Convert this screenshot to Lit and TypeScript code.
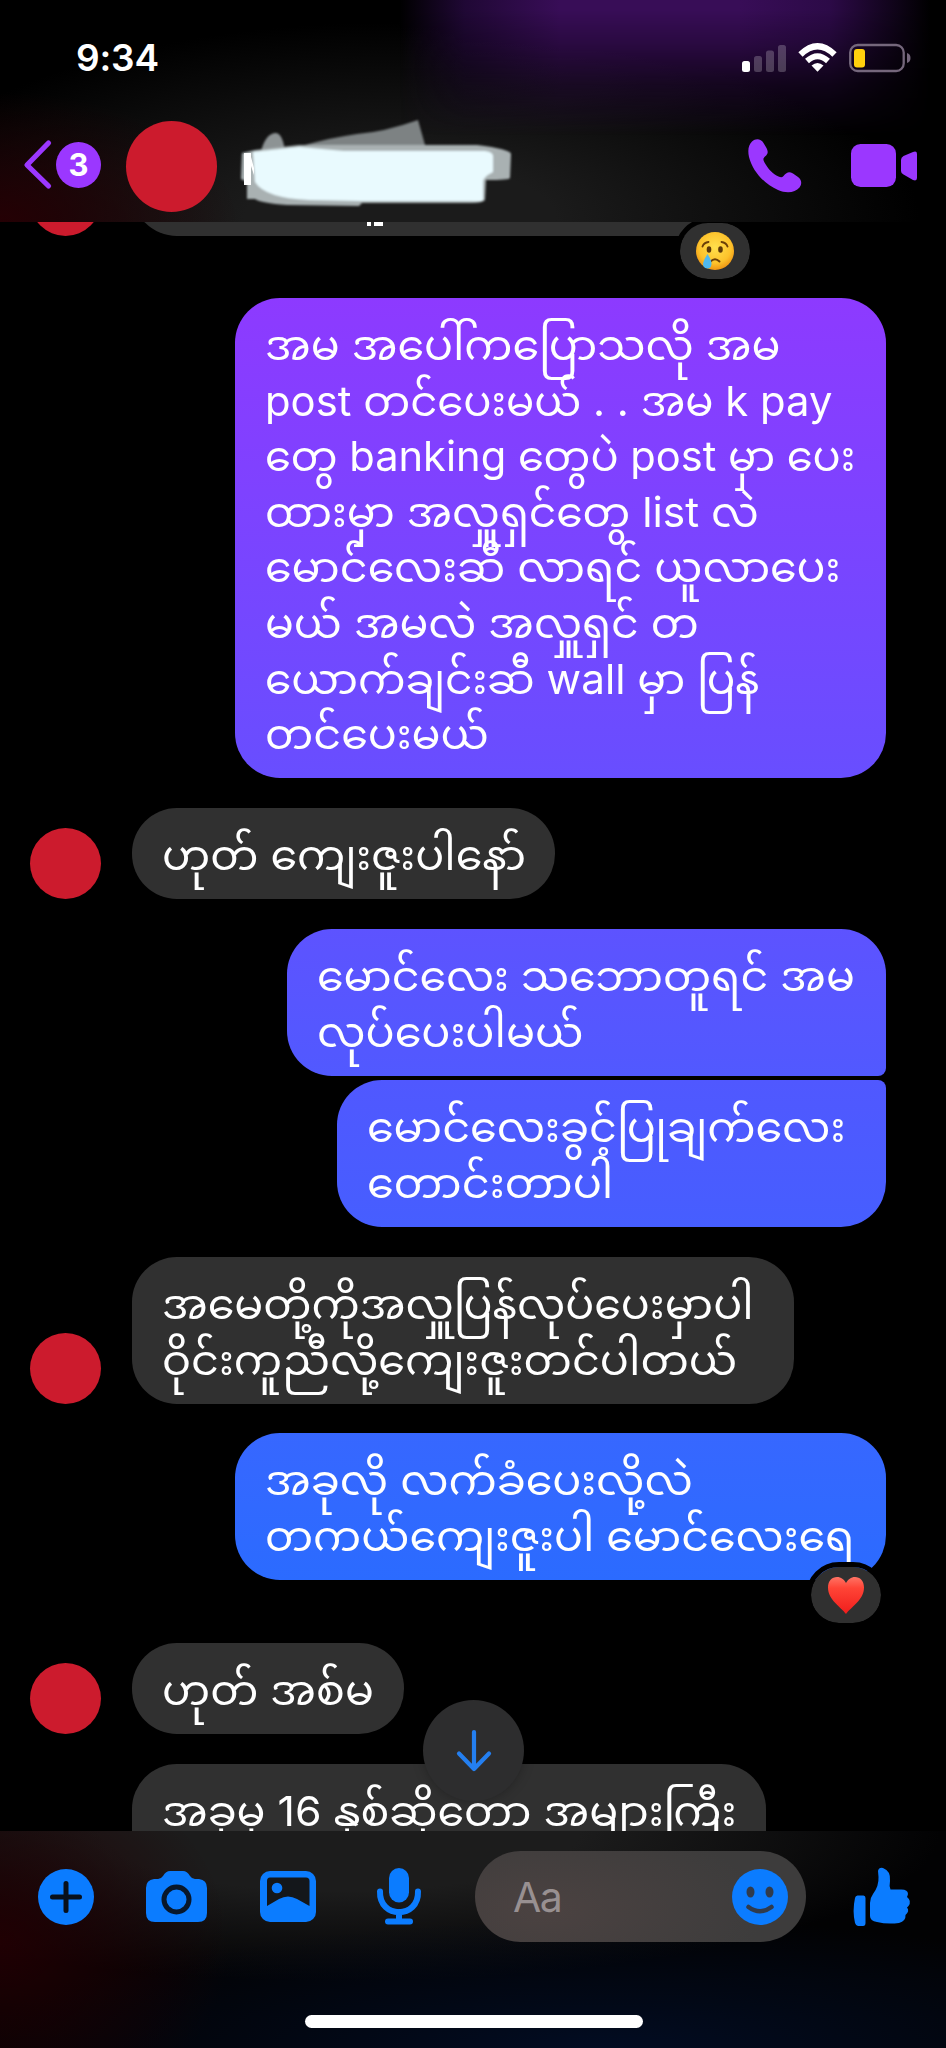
import { LitElement, html, css, svg } from "lit";
import { customElement, property } from "lit/decorators.js";

type Line = [string, number];

/** Message bubble; each line is set to its own measure. */
@customElement("chat-bubble")
class ChatBubble extends LitElement {
  @property({ attribute: false }) lines: Line[] = [];
  @property({ attribute: false }) tone = "grey";

  static styles = css`
    :host { display: block; }
    .bubble {
      box-sizing: border-box;
      width: 100%;
      height: 100%;
      padding: 20px 30px 0;
      border-radius: 45px;
      background: #303030;
      color: #fff;
      font: 400 41px/55.6px Inter, "Noto Sans Myanmar", "Noto Sans", "Liberation Sans", sans-serif;
    }
    .line { height: 55.6px; white-space: nowrap; }
    .line span { display: inline-block; transform-origin: 0 50%; white-space: nowrap; }
    .t1 { background: linear-gradient(#8d3aff, #684eff); }
    .t2 { background: linear-gradient(#5d53ff, #5159ff); border-bottom-right-radius: 8px; }
    .t3 { background: linear-gradient(#5058ff, #465eff); border-top-right-radius: 8px; }
    .t4 { background: linear-gradient(#3767ff, #2b6bff); }
  `;

  async firstUpdated() {
    await document.fonts.ready;
    this.renderRoot.querySelectorAll<HTMLElement>(".line span").forEach((el, i) => {
      el.style.transform = `scaleX(${(this.lines[i][1] + 4) / el.offsetWidth})`;
    });
  }

  render() {
    return html`<div class="bubble ${this.tone}">
      ${this.lines.map(([t]) => html`<div class="line"><span>${t}</span></div>`)}
    </div>`;
  }
}

const cry = svg`
  <defs><radialGradient id="f" cx=".5" cy=".4" r=".6"><stop offset="0" stop-color="#ffe04d"/><stop offset=".7" stop-color="#fdc22b"/><stop offset="1" stop-color="#ef9413"/></radialGradient></defs>
  <circle cx="19" cy="19" r="19" fill="url(#f)"/>
  <ellipse cx="13" cy="17.5" rx="2.3" ry="3.3" fill="#5b3708"/><ellipse cx="24.5" cy="17.5" rx="2.3" ry="3.3" fill="#5b3708"/>
  <path d="M6.500 14.500Q8 10.500 12.500 10M25.500 10Q30 10.500 31.500 14.500M14.500 29.500Q19 25 23.500 29.500" fill="none" stroke="#6b3f08" stroke-width="1.900" stroke-linecap="round"/>
  <path d="M11.500 22Q15.500 28 15.500 32Q15 37 11 36.500Q7 36 7 31.500Q8 27 11.500 22Z" fill="#4fb9ef"/>`;
const heart = svg`
  <defs><linearGradient id="h" x1="0" y1="0" x2="0" y2="1"><stop offset="0" stop-color="#ff7364"/><stop offset=".3" stop-color="#ff4436"/><stop offset="1" stop-color="#f01d1c"/></linearGradient></defs>
  <path d="M19 38C14 31 1 24 1 11.500C1 5 5 1 10 1C14 1 17 3.500 19 7C21 3.500 24 1 28 1C33 1 37 5 37 11.500C37 24 24 31 19 38Z" fill="url(#h)"/>`;

@customElement("app-root")
class AppRoot extends LitElement {
  static styles = css`
    :host { display: block; width: 946px; height: 2048px; overflow: hidden; background: #000; color: #fff;
      font-family: Inter, "Liberation Sans", sans-serif; }
    .phone { height: 2048px; display: flex; flex-direction: column; background: #000; }
    svg { display: block; overflow: visible; }
    .top { height: 222px; flex: none; display: flex; flex-direction: column; position: relative; isolation: isolate;
      background:
        radial-gradient(ellipse 240px 130px at 0 222px, #250004, transparent),
        radial-gradient(ellipse 520px 200px at 400px 222px, #1b1b1b 30%, transparent),
        #000; }
    .top::before { content: ""; position: absolute; inset: 0; z-index: -1;
      background: linear-gradient(90deg, transparent 400px, #200835 465px, #380d57 560px, #380d57 740px, #2c0a47 830px, transparent 930px);
      -webkit-mask-image: linear-gradient(#000 10px, #000b 45px, #0005 85px, transparent 135px); }
    .status { height: 88px; flex: none; box-sizing: border-box; padding: 32px 35px 0 76px; display: flex; justify-content: space-between; }
    .time { font-weight: 600; font-size: 37px; line-height: 52px; letter-spacing: -.2px; }
    .sys { display: flex; gap: 12px; padding-top: 11px; }
    .nav { height: 134px; flex: none; display: flex; align-items: center; padding-left: 24px; box-sizing: border-box; padding-top: 20px; }
    .chev { margin-right: 4px; }
    .count { width: 45px; height: 46px; border-radius: 50%; background: #9b37ff; font: 700 31px/46px Inter, sans-serif; text-align: center; }
    .face { width: 91px; height: 91px; border-radius: 50%; background: #cc1b2d; flex: none; }
    .nav .face { margin-left: 25px; margin-top: 3px; }
    .name { margin: -7px 0 0 23px; }
    .calls { flex: 1; display: flex; justify-content: space-between; padding: 2px 29px 0 236px; align-items: center; }
    .feed { height: 1609px; flex: none; overflow: hidden; position: relative; }
    .row { display: flex; align-items: flex-end; position: relative; }
    .in { padding-left: 30px; gap: 31px; }
    .in .face { width: 71px; height: 71px; }
    .out { justify-content: flex-end; padding-right: 60px; }
    .spacer { width: 71px; flex: none; }
    .r0 { height: 14px; } .r1 { height: 480px; margin-top: 62px; } .r2 { height: 91px; margin-top: 30px; }
    .r3 { height: 147px; margin-top: 30px; } .r4 { height: 147px; margin-top: 4px; }
    .r5 { height: 147px; margin-top: 30px; } .r6 { height: 147px; margin-top: 29px; }
    .r7 { height: 91px; margin-top: 63px; } .r8 { height: 147px; margin-top: 30px; }
    .row chat-bubble { height: 100%; }
    .b0 { width: 610px; height: 90px; border-radius: 45px; background: #303030; }
    .w1 { width: 651px; } .w2 { width: 423px; } .w3 { width: 599px; } .w4 { width: 549px; }
    .w5 { width: 662px; } .w6 { width: 651px; } .w7 { width: 272px; } .w8 { width: 634px; }
    .react { position: absolute; width: 70px; height: 56px; border-radius: 33px; background: #303030; border: 5px solid #000;
      background-clip: padding-box; display: grid; place-items: center; }
    .ra { left: 675px; top: -4px; } .rb { left: 806px; top: 129px; }
    .crumbs { position: absolute; left: 367px; top: 0; }
    .down { position: absolute; left: 423px; top: 1478px; width: 101px; height: 101px; border-radius: 50%; background: #2d2d2e;
      display: grid; place-items: center; box-shadow: 0 0 12px #0004; }
    .bottom { flex: 1; display: flex; flex-direction: column; align-items: center;
      background:
        radial-gradient(ellipse 230px 190px at 0 110px, #200003, transparent),
        radial-gradient(ellipse 620px 130px at 600px 217px, #020c22, transparent),
        radial-gradient(ellipse 600px 150px at 340px 0, #1c1c1c 40%, transparent),
        #020203; }
    .tools { height: 131px; width: 100%; box-sizing: border-box; padding: 0 36px 0 38px; display: flex; align-items: center; }
    .tools .cam { margin-left: 52px; } .tools .pic { margin-left: 53px; } .tools .mic { margin-left: 61px; }
    .tools .like { margin-left: 47px; }
    .input { width: 331px; height: 91px; margin-left: 54px; box-sizing: border-box; padding: 0 18px 0 38px; border-radius: 46px; display: flex; align-items: center;
      justify-content: space-between; color: #989091; font-size: 41px; letter-spacing: -1.5px;
      background: radial-gradient(ellipse 220px 90px at 70px 60px, #4b4241, transparent), #3d3c3c; }
    .home { width: 338px; height: 13px; border-radius: 7px; background: #fff; margin: 53px 0 0 2px; }
  `;

  render() {
    const blue = "#0b7cff";
    return html`<div class="phone">
      <header class="top">
        <div class="status">
          <div class="time">9:34</div>
          <div class="sys">
            <svg width="44" height="29"><rect y="18" width="8" height="11" rx="2.500" fill="#fff"/><g fill="#fff" opacity=".22"><rect x="12" y="13" width="8" height="16" rx="2.500"/><rect x="24" y="7.500" width="8" height="21.500" rx="2.500"/><rect x="36" y="2" width="8" height="27" rx="2.500"/></g></svg>
            <svg width="39" height="29" fill="none" stroke="#fff"><path d="M2.500 11.500Q19.500 -5 36.500 11.500" stroke-width="6.200"/><path d="M9 18Q19.500 8.500 30 18" stroke-width="5.800"/><path d="M13.500 22.500Q19.500 17.500 25.500 22.500L19.500 28.800Z" fill="#fff" stroke="none"/></svg>
            <svg width="62" height="29"><rect x="1.200" y="2" width="53.500" height="26" rx="7.500" fill="none" stroke="#75677c" stroke-width="2.300"/><rect x="5" y="6" width="11" height="18.500" rx="3" fill="#ffd00d"/><path d="M58 10Q61.500 11 61.500 15Q61.500 19 58 20Z" fill="#75677c"/></svg>
          </div>
        </div>
        <div class="nav">
          <svg class="chev" width="28" height="50"><path d="M24.500 3L3 25L24.500 46" fill="none" stroke="#9b37ff" stroke-width="5.200" stroke-linecap="round" stroke-linejoin="round"/></svg>
          <div class="count">3</div>
          <div class="face"></div>
          <svg class="name" width="272" height="86" viewBox="241 119 272 86">
            <defs><filter id="s"><feGaussianBlur stdDeviation="1.300"/></filter></defs>
            <g filter="url(#s)">
              <path d="M262 151Q267 133 277 133Q284 134 286 152Z" fill="#8d9394"/>
              <path d="M302 146Q335 137 358 134Q385 132 419 120L426 145L410 151L300 149Z" fill="#7d8283"/>
              <path d="M300 145L478 145Q511 149 512 154L511 178Q510 180 487 180L486 200Q484 203 472 203L363 203L360 206L288 205Q262 203 256 199L248 199L248 182L242 179L243 153L256 150Z" fill="#a9b1b2"/>
              <path d="M254 152L300 147L345 151L410 151L486 151Q494 152 494 156L494 172Q484 177 484 182L484 200Q482 202 472 201L362 201L310 200Q266 198 256 182Z" fill="#e9fafe"/>
            </g>
            <path d="M245 153H252V157L255 168V175L252 166V185H245Z" fill="#fff"/>
          </svg>
          <div class="calls">
            <svg width="54" height="54" viewBox="0 0 54 54"><path d="M4 2.500C8-1 13 0 15.500 4L18.500 9C20.500 13 20 15 17 17.500C15 19.500 15 20.500 16.500 23.500C20 30 25 35 30.500 37.500C33 38.500 34 38.500 35.500 37C39 33 41 32.500 45 34.500L50 38C54 41 54 45 51.500 48.500C47 54 38 54.500 30 51C16 45 4.500 32 1 18C-.500 11 .500 6 4 2.500Z" fill="#9b37ff"/></svg>
            <svg width="66" height="44" viewBox="0 0 66 44"><rect width="45" height="43" rx="9.500" fill="#9b37ff"/><path d="M50 16Q50 13.500 52.500 12L62 8Q66 6.500 66 10V34Q66 37.500 62 36L52.500 30.500Q50 29.500 50 27Z" fill="#9b37ff"/></svg>
          </div>
        </div>
      </header>
      <main class="feed">
        <div class="row in r0"><div class="face"></div><div class="b0"></div>
          <svg class="crumbs" width="17" height="5"><path d="M0 0H4V4H0ZM7 0H16V4H7Z" fill="#fff"/></svg>
          <div class="react ra"><svg width="38" height="38">${cry}</svg></div></div>
        <div class="row out r1"><chat-bubble class="w1" .tone=${"t1"} .lines=${[
          ["အမ အပေါ်ကပြောသလို အမ", 511], ["post တင်ပေးမယ် . . အမ k pay", 563], ["တွေ banking တွေပဲ post မှာ ပေး", 586],
          ["ထားမှာ အလှူရှင်တွေ list လဲ", 490], ["မောင်လေးဆီ လာရင် ယူလာပေး", 571], ["မယ် အမလဲ အလှူရှင် တ", 430],
          ["ယောက်ချင်းဆီ wall မှာ ပြန်", 490], ["တင်ပေးမယ်", 220]] as Line[]}></chat-bubble></div>
        <div class="row in r2"><div class="face"></div><chat-bubble class="w2" .lines=${[["ဟုတ် ကျေးဇူးပါနော်", 360]] as Line[]}></chat-bubble></div>
        <div class="row out r3"><chat-bubble class="w3" .tone=${"t2"} .lines=${[["မောင်လေး သဘောတူရင် အမ", 534], ["လုပ်ပေးပါမယ်", 263]] as Line[]}></chat-bubble></div>
        <div class="row out r4"><chat-bubble class="w4" .tone=${"t3"} .lines=${[["မောင်လေးခွင့်ပြုချက်လေး", 474], ["တောင်းတာပါ", 242]] as Line[]}></chat-bubble></div>
        <div class="row in r5"><div class="face"></div><chat-bubble class="w5" .lines=${[["အမေတို့ကိုအလှူပြန်လုပ်ပေးမှာပါ", 588], ["ဝိုင်းကူညီလို့ကျေးဇူးတင်ပါတယ်", 571]] as Line[]}></chat-bubble></div>
        <div class="row out r6"><chat-bubble class="w6" .tone=${"t4"} .lines=${[["အခုလို လက်ခံပေးလို့လဲ", 424], ["တကယ်ကျေးဇူးပါ မောင်လေးရေ", 586]] as Line[]}></chat-bubble>
          <div class="react rb"><svg width="38" height="38">${heart}</svg></div></div>
        <div class="row in r7"><div class="face"></div><chat-bubble class="w7" .lines=${[["ဟုတ် အစ်မ", 208]] as Line[]}></chat-bubble></div>
        <div class="row in r8"><div class="spacer"></div><chat-bubble class="w8" .lines=${[["အခုမှ 16 နှစ်ဆိုတော့ အများကြီး", 570]] as Line[]}></chat-bubble></div>
        <div class="down"><svg width="36" height="42"><path d="M18 2V38M3 23.500L18 39L33 23.500" fill="none" stroke="#247ff0" stroke-width="4.200" stroke-linecap="round" stroke-linejoin="round"/></svg></div>
      </main>
      <footer class="bottom">
        <div class="tools">
          <svg width="56" height="56"><circle cx="28" cy="28" r="28" fill=${blue}/><path d="M28 14.500V41.500M14.500 28H41.500" stroke="#08101c" stroke-width="5" stroke-linecap="round"/></svg>
          <svg class="cam" width="61" height="51"><path d="M8 8H12Q15 8 17 5Q20 0 24 0H37Q41 0 44 5Q46 8 49 8H53Q61 9 61 17V42Q61 51 52 51H9Q0 51 0 42V17Q0 9 8 8Z" fill=${blue}/><circle cx="30.500" cy="28.500" r="12.500" fill=${blue} stroke="#08172b" stroke-width="5"/></svg>
          <svg class="pic" width="56" height="51"><rect width="56" height="51" rx="10" fill=${blue}/><path d="M7 10Q7 6.500 10 6.500H46Q49.500 6.500 49.500 10V35L37 28Q28 23 19 28L7 35Z" fill="#14171b"/><circle cx="17" cy="17" r="5.300" fill=${blue}/></svg>
          <svg class="mic" width="44" height="57"><rect x="12" width="20" height="34.500" rx="10" fill=${blue}/><path d="M3 23.500C2 51 42 51 41 23.500M22 44V53M11 53.500H33" stroke=${blue} stroke-width="6" fill="none" stroke-linecap="round"/></svg>
          <div class="input"><span>Aa</span><svg width="56" height="56"><circle cx="28" cy="28" r="28" fill=${blue}/><g fill="#303b4c"><ellipse cx="18.500" cy="23" rx="4" ry="5.500"/><ellipse cx="37.500" cy="23" rx="4" ry="5.500"/></g><path d="M16.500 38Q28 46.500 39.500 38" fill="none" stroke="#303b4c" stroke-width="4.500" stroke-linecap="round"/></svg></div>
          <svg class="like" width="57" height="60"><path d="M4.500 28.500H10.500Q12.500 28.500 12.500 31V56Q12.500 59 10 59H5Q3 59 2 56Q-.800 44 2 31Q2.500 28.500 4.500 28.500Z" fill=${blue}/><path d="M17 36Q17 31 20 27Q26 19 25.500 10L25 4Q26 0 30 1Q38 4 37 14Q36 19 37.500 22.500H47Q55 22 55 27Q54.500 29 54 30Q59 34 55.500 39L54 40.500Q57 44 52.500 48Q53 54 46 56Q34 57.500 24 55Q17 54 17 49Z" fill=${blue}/></svg>
        </div>
        <div class="home"></div>
      </footer>
    </div>`;
  }
}
